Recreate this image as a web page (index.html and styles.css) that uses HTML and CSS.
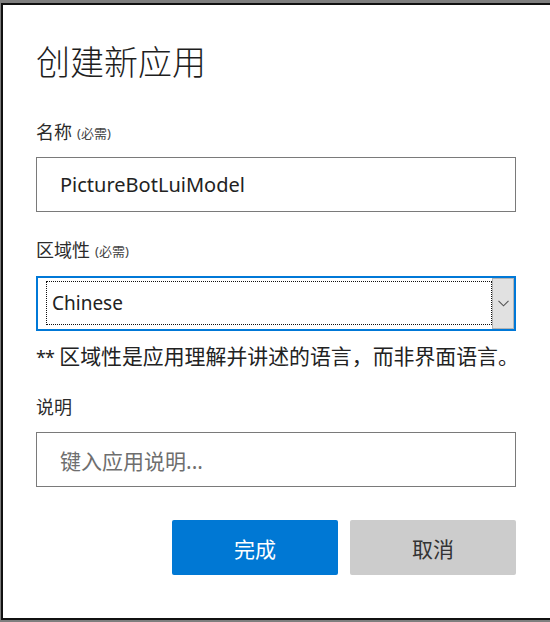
FILE: index.html
```html
<!DOCTYPE html>
<html lang="zh-CN">
<head>
<meta charset="utf-8">
<title>创建新应用</title>
<link rel="stylesheet" href="styles.css">
</head>
<body>
<div class="frame">
  <div class="dialog">
    <h1 class="title">创建新应用</h1>

    <label class="label">名称 <span class="req">(必需)</span></label>
    <div class="field"><span class="value">PictureBotLuiModel</span></div>

    <label class="label label-gap">区域性 <span class="req">(必需)</span></label>
    <div class="select">
      <div class="select-focus"><span class="select-value">Chinese</span></div>
      <div class="select-btn">
        <svg width="11" height="7" viewBox="0 0 11 7"><path d="M0.5 0.8 L5.5 5.8 L10.5 0.8" fill="none" stroke="#555" stroke-width="1.1"/></svg>
      </div>
    </div>

    <p class="note"><span class="stars">**</span> 区域性是应用理解并讲述的语言，而非界面语言。</p>

    <label class="label label-gap2">说明</label>
    <div class="field"><span class="placeholder">键入应用说明...</span></div>

    <div class="actions">
      <button class="btn btn-primary">完成</button>
      <button class="btn btn-secondary">取消</button>
    </div>
  </div>
</div>
</body>
</html>
```

FILE: styles.css
```css
html, body {
  margin: 0;
  padding: 0;
}

body {
  width: 550px;
  height: 622px;
  overflow: hidden;
  background: #7f7f7f;
  font-family: "Noto Sans", "Noto Sans CJK SC", sans-serif;
  color: #222;
}

.frame {
  box-sizing: border-box;
  height: 622px;
  padding: 3px 0 2px 1px;
}

.dialog {
  box-sizing: border-box;
  height: 617px;
  background: #fff;
  border-top: 2px solid #111;
  border-left: 2px solid #111;
  border-bottom: 2px solid #111;
  padding: 0 0 0 33px;
  display: flex;
  flex-direction: column;
}

.title {
  margin: 35px 0 0;
  height: 44px;
  font-size: 34px;
  line-height: 44px;
  font-weight: 300;
  color: #1e1e1e;
}

.label {
  display: flex;
  align-items: center;
  gap: 5px;
  height: 24px;
  margin-top: 36px;
  font-size: 18px;
  line-height: 24px;
  color: #2b2b2b;
}

.label-gap { margin-top: 26px; }
.label-gap2 { margin-top: 26px; }

.req {
  font-size: 13px;
  color: #444;
  padding-top: 2px;
}

.field {
  box-sizing: border-box;
  width: 480px;
  height: 55px;
  margin-top: 13px;
  border: 1px solid #7a7a7a;
  background: #fff;
  display: flex;
  align-items: center;
  padding-left: 23px;
  font-size: 20px;
}

.value { color: #222; }

.placeholder {
  color: #6e6e6e;
  font-size: 21px;
}

.select {
  box-sizing: border-box;
  width: 480px;
  height: 55px;
  margin-top: 14px;
  border: 2px solid #0078d7;
  display: flex;
  align-items: stretch;
  background: #fff;
}

.select-focus {
  flex: 1;
  margin: 3px 0 4px 8px;
  border: 1px dotted #111;
  display: flex;
  align-items: center;
  padding-left: 5px;
  font-size: 19px;
}

.select-btn {
  box-sizing: border-box;
  width: 22px;
  background: #e1e1e1;
  border: 1px solid #b4b4b4;
  display: flex;
  align-items: center;
  justify-content: center;
}

.note {
  margin: 12px 0 0;
  height: 26px;
  font-size: 20.9px;
  line-height: 26px;
  color: #222;
  white-space: nowrap;
}

.stars {
  font-size: 18px;
  letter-spacing: -1px;
}

.actions {
  width: 480px;
  margin-top: 33px;
  display: flex;
  justify-content: flex-end;
  gap: 12px;
}

.btn {
  width: 166px;
  height: 55px;
  border: none;
  border-radius: 2px;
  font-family: "Noto Sans", "Noto Sans CJK SC", sans-serif;
  font-size: 21px;
  padding: 0;
}

.btn-primary {
  background: #0078d4;
  color: #fff;
}

.btn-secondary {
  background: #cccccc;
  color: #333;
}
```
